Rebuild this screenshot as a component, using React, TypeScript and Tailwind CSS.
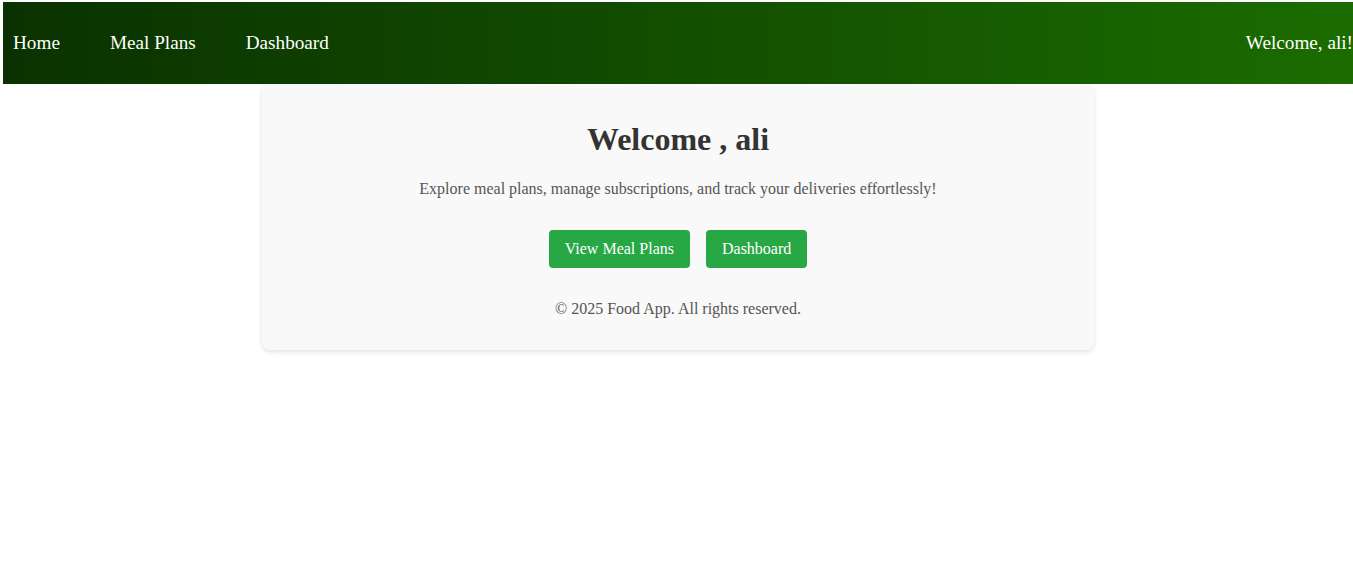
export default function App() {
  return (
    <div className="min-h-screen bg-white pl-[3px] pt-[2px] font-['Liberation_Serif',serif]">
      <nav className="flex h-[82px] items-center justify-between bg-gradient-to-r from-[#0a3200] to-[#1b6c00] pl-[10px] text-[19.2px] text-white">
        <div className="flex gap-[50px]">
          <a href="#">Home</a>
          <a href="#">Meal Plans</a>
          <a href="#">Dashboard</a>
        </div>
        <span>Welcome, ali!</span>
      </nav>

      <div className="mx-auto w-[832px] rounded-lg bg-[#f9f9f9] px-5 pb-[32px] pt-4 text-center shadow-[0_2px_5px_rgba(0,0,0,0.12)]">
        <h1 className="mb-[22px] mt-[21px] text-[32px] font-bold leading-[37px] text-[#333]">Welcome , ali</h1>
        <p className="text-[16px] leading-[18px] text-[#555]">
          Explore meal plans, manage subscriptions, and track your deliveries effortlessly!
        </p>
        <div className="mt-[32px] flex justify-center gap-4">
          <button className="rounded bg-[#28a745] px-4 py-[10px] text-[16px] leading-[18px] text-white">View Meal Plans</button>
          <button className="rounded bg-[#28a745] px-4 py-[10px] text-[16px] leading-[18px] text-white">Dashboard</button>
        </div>
        <p className="mt-[32px] text-[16px] leading-[18px] text-[#555]">© 2025 Food App. All rights reserved.</p>
      </div>
    </div>
  );
}
